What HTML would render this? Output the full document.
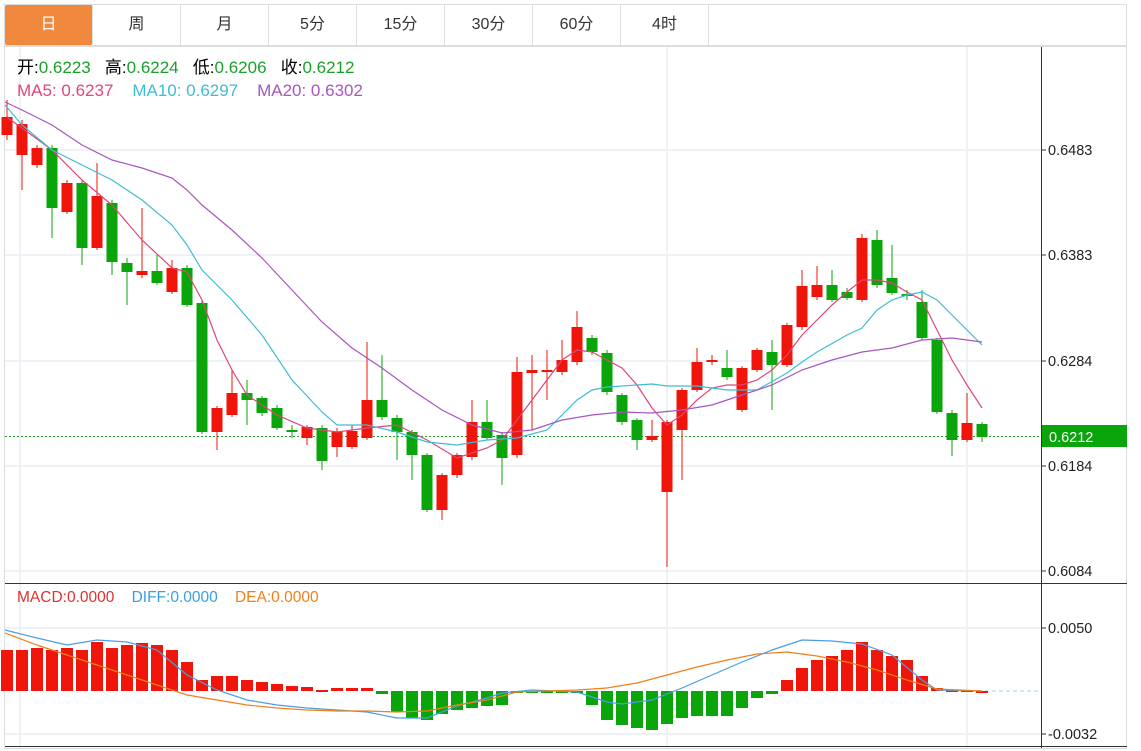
<!DOCTYPE html><html><head><meta charset="utf-8"><style>
body{margin:0;width:1141px;height:751px;background:#fff;overflow:hidden;font-family:"Liberation Sans","Noto Sans CJK SC",sans-serif;position:relative}
.tabs{position:absolute;left:4px;top:4px;height:42px;width:1123px;border:1px solid #ddd;box-sizing:border-box;display:flex}
.tab{width:87px;border-right:1px solid #ddd;text-align:center;line-height:40px;font-size:16px;color:#333}
.tab.a{background:#f0883e;color:#fff;border-radius:2px}
.hd{position:absolute;left:17px;font-size:17px;white-space:pre;line-height:20px}
.g{color:#1a9f2a}
svg{position:absolute;left:0;top:0}
.ax{font-size:14.5px;fill:#222}
</style></head><body>
<div class="tabs"><div class="tab a">日</div><div class="tab">周</div><div class="tab">月</div><div class="tab">5分</div><div class="tab">15分</div><div class="tab">30分</div><div class="tab">60分</div><div class="tab">4时</div></div>
<svg id="s" width="1141" height="751" xmlns="http://www.w3.org/2000/svg">
<rect x="4.5" y="46.5" width="1122" height="702" fill="none" stroke="#ddd"/>
<g stroke="#e8eef3" stroke-width="1.5">
<line x1="5" x2="1041" y1="150" y2="150"/><line x1="5" x2="1041" y1="255" y2="255"/><line x1="5" x2="1041" y1="361" y2="361"/><line x1="5" x2="1041" y1="466" y2="466"/><line x1="5" x2="1041" y1="571" y2="571"/>
<line x1="5" x2="1041" y1="628" y2="628"/><line x1="5" x2="1041" y1="734" y2="734"/>
<line x1="20" x2="20" y1="47" y2="748"/><line x1="667" x2="667" y1="47" y2="748"/><line x1="967" x2="967" y1="47" y2="748"/>
</g>
<line x1="1041.5" x2="1041.5" y1="47" y2="748" stroke="#333"/>
<line x1="5" x2="1127" y1="583.5" y2="583.5" stroke="#333"/>
<line x1="5" x2="1127" y1="746.5" y2="746.5" stroke="#333"/>
<g stroke="#333">
<line x1="1041" x2="1046" y1="150" y2="150"/><line x1="1041" x2="1046" y1="255" y2="255"/><line x1="1041" x2="1046" y1="361" y2="361"/><line x1="1041" x2="1046" y1="466" y2="466"/><line x1="1041" x2="1046" y1="571" y2="571"/><line x1="1041" x2="1046" y1="628" y2="628"/><line x1="1041" x2="1046" y1="734" y2="734"/></g>
<text class="ax" x="1048" y="155">0.6483</text><text class="ax" x="1048" y="260">0.6383</text><text class="ax" x="1048" y="366">0.6284</text><text class="ax" x="1048" y="471">0.6184</text><text class="ax" x="1048" y="576">0.6084</text><text class="ax" x="1048" y="633">0.0050</text><text class="ax" x="1048" y="739">-0.0032</text>
<line x1="5" x2="1041" y1="436.5" y2="436.5" stroke="#1a9f2a" stroke-dasharray="2,2"/>
<rect x="1042" y="425" width="85" height="22" fill="#0aa50a"/><text x="1049" y="442" font-size="14.5" fill="#fff">0.6212</text>
<line x1="985" x2="1041" y1="691" y2="691" stroke="#9cd0e8" stroke-dasharray="4,3"/>
<g id="c"></g>
</svg>
<div class="hd" style="top:58px">开:<span class="g">0.6223</span>   高:<span class="g">0.6224</span>   低:<span class="g">0.6206</span>   收:<span class="g">0.6212</span></div>
<div class="hd" style="top:81px"><span style="color:#e0457b">MA5: 0.6237</span>    <span style="color:#3fbcd5">MA10: 0.6297</span>    <span style="color:#a855c0">MA20: 0.6302</span></div>
<div class="hd" style="top:588px;font-size:15.5px"><span style="color:#e03030">MACD:0.0000</span>    <span style="color:#3a9ee0">DIFF:0.0000</span>    <span style="color:#f07f1a">DEA:0.0000</span></div>
<script>
var C=[[135,117,100,140],[155,124,120,190],[165,148,145,168],[148,208,145,238],[212,183,180,214],[183,248,180,265],[248,196,163,250],[203,262,200,275],[263,272,258,305],[275,271,208,278],[271,283,255,285],[292,268,260,294],[268,305,265,307],[303,432,300,434],[432,408,406,450],[415,393,370,417],[393,400,380,425],[398,413,396,416],[408,428,405,430],[430,432,425,438],[438,427,425,445],[428,461,425,470],[447,432,428,457],[447,431,425,449],[438,400,342,440],[400,417,355,420],[418,432,415,460],[432,455,430,480],[455,510,453,512],[510,475,473,520],[475,455,453,478],[457,422,400,460],[422,438,400,440],[435,458,432,485],[455,372,357,458],[373,370,355,430],[372,370,350,400],[372,360,340,375],[362,327,311,365],[338,352,335,355],[353,392,350,395],[395,422,393,425],[420,440,418,450],[440,436,420,442],[492,422,420,567],[430,390,388,480],[390,362,348,392],[362,360,355,365],[368,377,350,380],[410,368,366,412],[370,350,348,372],[352,365,340,410],[365,325,323,367],[327,286,270,330],[297,285,266,300],[285,300,270,302],[292,298,288,300],[300,238,234,302],[240,285,230,288],[278,293,245,295],[294,296,290,300],[302,338,290,340],[340,412,338,414],[413,440,410,456],[440,423,393,442],[424,437,422,442]];
var M=[650,650,648,650,648,650,642,648,645,643,645,650,662,680,676,676,680,682,684,686,687,690,688,688,688,694,712,718,720,714,710,708,706,705,692,692,692,692,692,705,720,725,728,730,724,718,716,716,716,708,698,694,680,668,660,656,650,642,650,656,660,676,688,690,690,691];
var L={"#e0457b":[[8,118],[22,128],[52,150],[82,180],[112,205],[142,240],[172,268],[187,272],[202,300],[217,340],[232,370],[247,395],[262,405],[277,415],[307,428],[337,432],[367,428],[397,425],[427,440],[457,458],[487,448],[502,440],[517,420],[532,400],[547,380],[562,360],[577,350],[592,352],[607,360],[622,368],[637,385],[652,408],[667,425],[682,415],[697,400],[712,388],[727,385],[742,385],[757,380],[772,370],[787,355],[802,335],[817,320],[832,305],[847,292],[862,280],[877,280],[892,283],[907,292],[922,300],[937,330],[952,360],[967,385],[982,408]],
"#3fbcd5":[[5,105],[22,125],[52,150],[82,165],[112,180],[142,200],[172,225],[187,245],[202,270],[232,300],[262,335],[292,380],[322,412],[337,425],[367,425],[397,432],[427,442],[457,445],[487,440],[517,438],[547,430],[577,400],[592,390],[607,387],[637,385],[652,384],[667,386],[697,386],[727,390],[757,390],[787,373],[802,362],[817,352],[847,335],[862,328],[877,310],[892,300],[907,295],[922,292],[937,300],[952,315],[967,330],[982,345]],
"#a855c0":[[5,102],[22,110],[52,125],[82,145],[112,160],[142,168],[172,178],[187,190],[202,205],[232,230],[262,258],[292,290],[322,322],[352,348],[382,368],[412,390],[442,410],[472,425],[502,433],[532,430],[562,420],[592,415],[622,412],[652,413],[682,410],[712,405],[742,395],[772,385],[802,370],[832,360],[862,352],[892,348],[922,340],[952,338],[982,342]],
"#4a9fe0":[[5,630],[37,638],[67,645],[97,640],[127,642],[157,650],[187,675],[217,690],[247,700],[277,705],[307,708],[337,710],[367,712],[397,718],[427,718],[457,706],[487,698],[502,693],[532,690],[577,692],[607,702],[622,704],[652,700],[682,688],[712,675],[742,662],[772,650],[802,640],[832,641],[862,644],[892,655],[922,680],[937,690],[982,691]],
"#f07f1a":[[5,633],[37,645],[67,655],[97,665],[127,675],[157,685],[187,695],[217,700],[247,705],[277,708],[307,710],[337,711],[367,711],[397,712],[427,711],[457,705],[487,700],[517,692],[577,690],[607,688],[637,683],[667,675],[697,667],[727,660],[757,654],[787,652],[817,656],[847,662],[877,670],[907,680],[937,689],[982,691]]};
var h="";
C.forEach(function(c,i){var x=7+i*15,up=c[1]<c[0],col=up?"#f0150a":"#0aa50a",t=Math.min(c[0],c[1]),b=Math.max(c[0],c[1]);
h+='<line x1="'+x+'" x2="'+x+'" y1="'+c[2]+'" y2="'+c[3]+'" stroke="'+col+'"/><rect x="'+(x-5.5)+'" y="'+t+'" width="11" height="'+Math.max(2,b-t)+'" fill="'+col+'"/>';});
M.forEach(function(v,i){var x=7+i*15,col=v<=691?"#f0150a":"#0aa50a",t=Math.min(v,691),hh=Math.max(2,Math.abs(v-691));
h+='<rect x="'+(x-6)+'" y="'+t+'" width="12" height="'+hh+'" fill="'+col+'"/>';});
for(var k in L){h+='<polyline fill="none" stroke="'+k+'" stroke-width="1.2" points="'+L[k].map(function(p){return p.join(",")}).join(" ")+'"/>';}
document.getElementById("c").innerHTML=h;
</script>
</body></html>
